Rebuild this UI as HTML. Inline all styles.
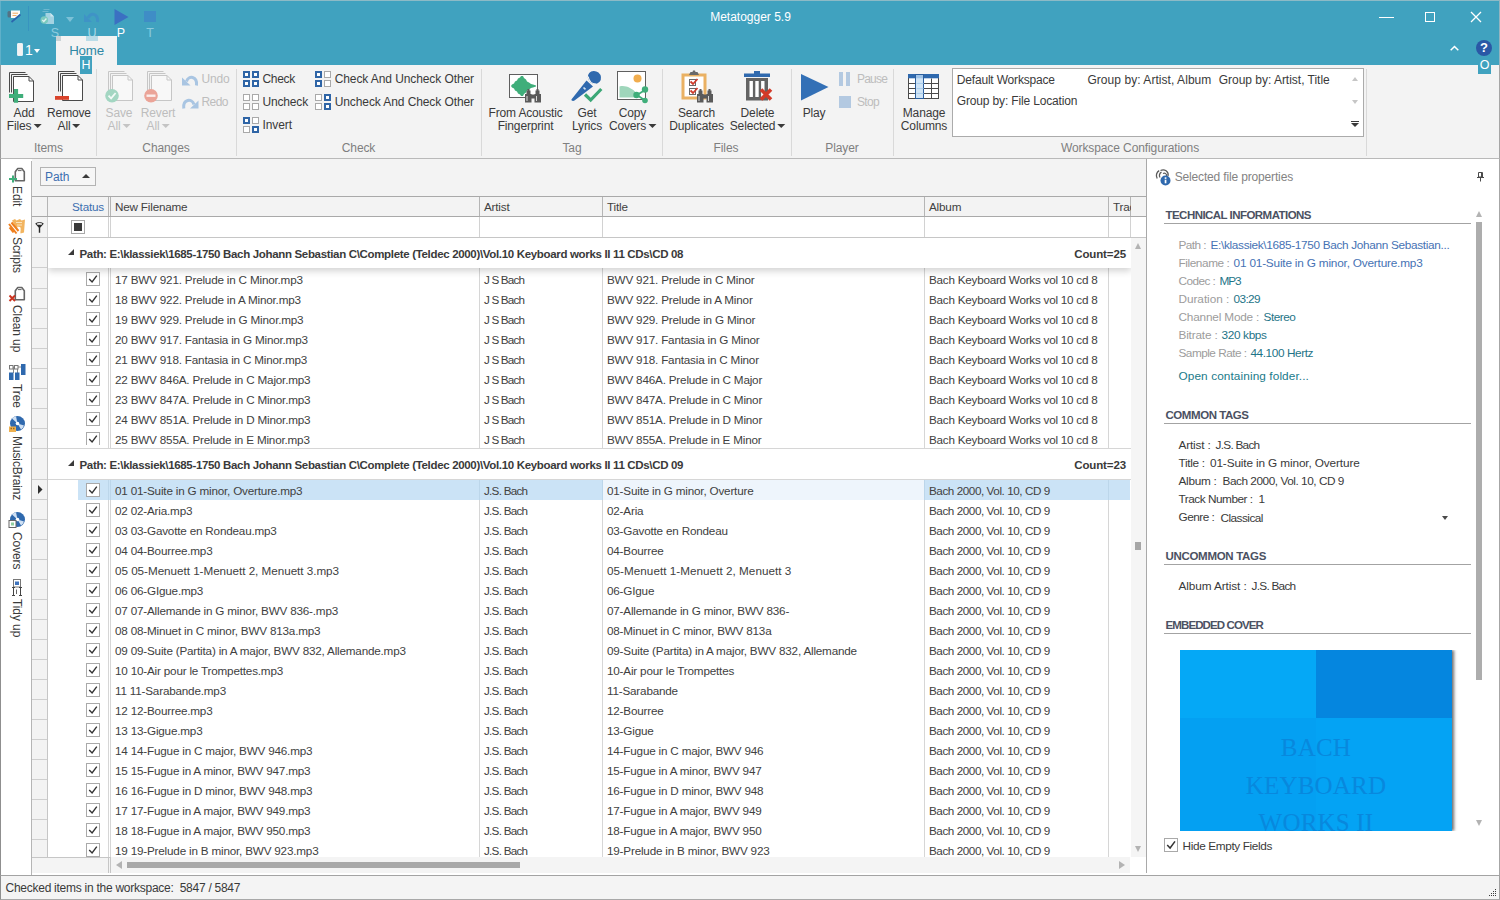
<!DOCTYPE html>
<html lang="en"><head><meta charset="utf-8"><title>Metatogger 5.9</title>
<style>
*{box-sizing:border-box;margin:0;padding:0}
html,body{width:1500px;height:900px;overflow:hidden;background:#fff}
body{font-family:"Liberation Sans",sans-serif;font-size:11.6px;color:#3b3b3b;line-height:14px;letter-spacing:-0.22px}
#win{position:relative;width:1500px;height:900px;overflow:hidden;background:#fff}
.a{position:absolute}
.t{position:absolute;white-space:pre}
.c{position:absolute;white-space:pre;text-align:center;transform:translateX(-50%)}
#title{left:0;top:0;width:1500px;height:65px;background:#40A2BF}
#ribbon{left:0;top:65px;width:1500px;height:94px;background:#F3F3F3;border-bottom:1px solid #b9b9b9;border-left:1px solid #9a9a9a;border-right:1px solid #a6a6a6}
.sep{position:absolute;top:4px;width:1px;height:87px;background:#d8d8d8}
.gl{position:absolute;top:76px;color:#7f7f7f;white-space:pre;transform:translateX(-50%);font-size:12px;letter-spacing:-0.1px}
.bt{position:absolute;white-space:pre;text-align:center;transform:translateX(-50%);color:#3a3a3a;line-height:13px;font-size:12px;letter-spacing:-0.15px}
.dis{color:#bdbdbd !important}
.st{position:absolute;white-space:pre;color:#3a3a3a;font-size:12px;letter-spacing:-0.1px}
.arr{display:inline-block;width:0;height:0;border-left:4px solid transparent;border-right:4px solid transparent;border-top:4.5px solid #3a3a3a;vertical-align:middle;margin-left:2px;margin-bottom:1px}
.dis .arr{border-top-color:#c4c4c4}
.g{font-size:11.7px;letter-spacing:-0.19px;color:#414141}
.gb{font-size:11.5px;letter-spacing:-0.33px;font-weight:700;color:#3a3a3a}
.p{font-size:11.7px;letter-spacing:-0.19px}
.sh{font-size:11.3px;letter-spacing:-0.42px;font-weight:700;color:#4b5162}
svg{position:absolute;overflow:visible}
</style></head>
<body><div id="win">
<div class="a" id="title">
<div class="a" style="left:0;top:0;width:1500px;height:1px;background:#8dbac6"></div>
<div class="a" style="left:0;top:1px;width:1px;height:64px;background:#5fb0c9"></div>
<div class="a" style="left:1499px;top:0;width:1px;height:65px;background:#93b4c0"></div>
<svg style="left:7px;top:9px" width="15" height="15" viewBox="0 0 15 15"><rect x="0.500" y="2" width="3.500" height="6.500" rx="1.500" fill="#586a7a" opacity="0.850"/><path d="M4 1.500h9v3.500l-4.500 4h-4.500z" fill="#fdfbf7"/><path d="M5.500 4.200h5.500M5.500 6.500h4" stroke="#f0a050" stroke-width="0.900"/><path d="M13.500 5.500l-9 7.500" stroke="#2b66ad" stroke-width="1.700"/></svg>
<div class="a" style="left:28px;top:6px;width:1px;height:25px;background:#3894bf"></div>
<svg style="left:40px;top:8px" width="16" height="17" viewBox="0 0 16 17" opacity="0.95"><path d="M3.5 1.5h6M2.5 3.5h6" stroke="#6fb9d0" stroke-width="1"/><path d="M5.5 5h5l3.5 3.500v7.5h-8.500z" fill="#a9d6e4"/><path d="M10.5 5v3.500h3.500" fill="#d6ecf3"/><circle cx="4.300" cy="12" r="3.800" fill="#7fcdbf"/><path d="M2.300 12l1.500 1.500 2.600-3" stroke="#eaf7f4" stroke-width="1.300" fill="none"/></svg>
<div class="a" style="left:65.500px;top:16.500px;width:0;height:0;border-left:4.500px solid transparent;border-right:4.500px solid transparent;border-top:5px solid #7cc1d7"></div>
<svg style="left:84px;top:12px" width="16" height="11" viewBox="0 0 16 11"><path d="M13.500 10C14.500 1 6 0 4.200 6" stroke="#3f93c6" stroke-width="3" fill="none"/><path d="M0 2V10H8z" fill="#3f93c6"/></svg>
<svg style="left:114px;top:9px" width="15" height="16" viewBox="0 0 15 16"><path d="M0.500 0l14 8-14 8z" fill="#3b70c2"/></svg>
<div class="a" style="left:144px;top:11px;width:12px;height:11px;background:#3f8dc6"></div>
<div class="c" style="left:55px;top:26px;color:#8ccbde;font-size:12.500px;letter-spacing:0">S</div>
<div class="c" style="left:92px;top:26px;color:#a9d8e6;font-size:12.500px;letter-spacing:0">U</div>
<div class="c" style="left:121px;top:26px;color:#ffffff;font-size:12.500px;letter-spacing:0">P</div>
<div class="c" style="left:150px;top:26px;color:#8ccbde;font-size:12.500px;letter-spacing:0">T</div>
<div class="a" style="left:17px;top:43px;width:6px;height:13px;background:#f4f2f2;border:1px solid #e6f1f5;border-radius:1px"></div>
<div class="t" style="left:25px;top:42px;color:#fff;font-size:14px;letter-spacing:0;line-height:16px">1</div>
<div class="a" style="left:34px;top:49px;width:0;height:0;border-left:3.500px solid transparent;border-right:3.500px solid transparent;border-top:4px solid #fff"></div>
<div class="a" style="left:56px;top:36px;width:61px;height:30px;background:#F3F3F3"></div>
<div class="a" style="left:56px;top:36px;width:5px;height:5px;background:#c9d3d6"></div>
<div class="a" style="left:86px;top:36px;width:12px;height:5px;background:#b9dce8"></div>
<div class="c" style="left:86.500px;top:43px;color:#2f88a5;font-size:13.300px;line-height:16px;letter-spacing:-0.200px">Home</div>
<div class="c" style="left:750.500px;top:9px;color:#fff;font-size:12px;line-height:16px;letter-spacing:0">Metatogger 5.9</div>
<div class="a" style="left:1379px;top:17px;width:15px;height:1px;background:#fff"></div>
<div class="a" style="left:1425px;top:12px;width:10px;height:10px;border:1px solid #fff"></div>
<svg style="left:1471px;top:12px" width="10" height="10" viewBox="0 0 10 10"><path d="M0 0l10 10M10 0l-10 10" stroke="#fff" stroke-width="1.300"/></svg>
<svg style="left:1450px;top:45px" width="9" height="6" viewBox="0 0 9 6"><path d="M0.700 5.300l3.800-3.800 3.800 3.800" stroke="#fff" stroke-width="1.500" fill="none"/></svg>
<div class="a" style="left:1476px;top:40px;width:16px;height:16px;border-radius:8px;background:#2a58a6"></div>
<div class="c" style="left:1484px;top:40px;color:#fff;font-size:13px;font-weight:700;line-height:16px;letter-spacing:0">?</div>
</div>
<div class="a" id="ribbon"></div>
<svg style="left:6px;top:71px" width="32" height="32" viewBox="0 0 32 32"><path d="M3.500 21.500V1.500H19.500M5.500 21.500V3.500H21.500" stroke="#4a4a4a" stroke-width="1" fill="none"/><path d="M7.500 5.500H23L27.500 10V30.500H7.500Z" fill="#fff" stroke="#4a4a4a" stroke-width="1"/><path d="M23 5.500V10H27.500" fill="none" stroke="#4a4a4a" stroke-width="1"/><path d="M3 25h14.200M10 18v13.800" stroke="#3fae7a" stroke-width="4.200"/></svg>
<div class="bt" style="left:24.0px;top:107px">Add<br>Files<span class="arr"></span></div>
<svg style="left:55px;top:70px" width="32" height="32" viewBox="0 0 32 32"><path d="M3.500 21.500V1.500H19.500M5.500 21.500V3.500H21.500" stroke="#4a4a4a" stroke-width="1" fill="none"/><path d="M7.500 5.500H23L27.500 10V30.500H7.500Z" fill="#fff" stroke="#4a4a4a" stroke-width="1"/><path d="M23 5.500V10H27.500" fill="none" stroke="#4a4a4a" stroke-width="1"/><rect x="0" y="26" width="14" height="3.800" fill="#d9432b"/></svg>
<div class="bt" style="left:69.0px;top:107px">Remove<br>All<span class="arr"></span></div>
<div class="gl" style="left:48.5px;top:141px">Items</div>
<div class="a" style="left:96px;top:69px;width:1px;height:87px;background:#d9d9d9"></div>
<svg style="left:105px;top:70px" width="32" height="32" viewBox="0 0 32 32"><path d="M3.500 21.500V1.500H19.500M5.500 21.500V3.500H21.500" stroke="#c6c6c6" stroke-width="1" fill="none"/><path d="M7.500 5.500H23L27.500 10V30.500H7.500Z" fill="#f8f8f8" stroke="#c6c6c6" stroke-width="1"/><path d="M23 5.500V10H27.500" fill="none" stroke="#c6c6c6" stroke-width="1"/><circle cx="7" cy="25.700" r="6.800" fill="#a3d6c2"/><path d="M3.500 25.700l2.600 2.700 4.500-5.400" stroke="#f3faf7" stroke-width="1.800" fill="none"/></svg>
<div class="bt dis" style="left:119.0px;top:107px">Save<br>All<span class="arr"></span></div>
<svg style="left:144px;top:70px" width="32" height="32" viewBox="0 0 32 32"><path d="M3.500 21.500V1.500H19.500M5.500 21.500V3.500H21.500" stroke="#c6c6c6" stroke-width="1" fill="none"/><path d="M7.500 5.500H23L27.500 10V30.500H7.500Z" fill="#f8f8f8" stroke="#c6c6c6" stroke-width="1"/><path d="M23 5.500V10H27.500" fill="none" stroke="#c6c6c6" stroke-width="1"/><circle cx="7" cy="25.700" r="6.800" fill="#eba498"/><rect x="2.500" y="24.500" width="9" height="2.400" fill="#fbeeec"/></svg>
<div class="bt dis" style="left:158.0px;top:107px">Revert<br>All<span class="arr"></span></div>
<svg style="left:182px;top:75px" width="17" height="11" viewBox="0 0 17 11"><path d="M14.500 10.500C15.500 1 6.500 0 4.500 6.500" stroke="#a9c5e2" stroke-width="3" fill="none"/><path d="M0 2.500V10.500H8.500z" fill="#a9c5e2"/></svg>
<div class="t" style="left:201.5px;top:72.0px;font-size:12px;letter-spacing:-0.172px;color:#bdbdbd;">Undo</div>
<svg style="left:182px;top:98px" width="17" height="11" viewBox="0 0 17 11"><path d="M1.800 10.500C0.500 1 10 0 12 6.500" stroke="#a9c5e2" stroke-width="3" fill="none"/><path d="M16.500 2.500V10.500H8z" fill="#a9c5e2"/></svg>
<div class="t" style="left:201.5px;top:95.0px;font-size:12px;letter-spacing:-0.597px;color:#bdbdbd;">Redo</div>
<div class="gl" style="left:166.0px;top:141px">Changes</div>
<div class="a" style="left:236px;top:69px;width:1px;height:87px;background:#d9d9d9"></div>
<svg style="left:243px;top:71px" width="16" height="16" viewBox="0 0 16 16"><rect x="1" y="1" width="5" height="5" fill="#fff" stroke="#2f65a6" stroke-width="2"/><rect x="10" y="1" width="5" height="5" fill="#fff" stroke="#2f65a6" stroke-width="2"/><rect x="1" y="10" width="5" height="5" fill="#fff" stroke="#2f65a6" stroke-width="2"/><rect x="10" y="10" width="5" height="5" fill="#fff" stroke="#2f65a6" stroke-width="2"/></svg>
<div class="t" style="left:262.5px;top:72.0px;font-size:12px;letter-spacing:-0.303px;color:#3a3a3a;">Check</div>
<svg style="left:243px;top:94px" width="16" height="16" viewBox="0 0 16 16"><rect x="0.5" y="0.5" width="6" height="6" fill="#fff" stroke="#a9a9a9" stroke-width="1"/><rect x="9.5" y="0.5" width="6" height="6" fill="#fff" stroke="#a9a9a9" stroke-width="1"/><rect x="0.5" y="9.5" width="6" height="6" fill="#fff" stroke="#a9a9a9" stroke-width="1"/><rect x="9.5" y="9.5" width="6" height="6" fill="#fff" stroke="#a9a9a9" stroke-width="1"/></svg>
<div class="t" style="left:262.5px;top:95.0px;font-size:12px;letter-spacing:-0.170px;color:#3a3a3a;">Uncheck</div>
<svg style="left:243px;top:117px" width="16" height="16" viewBox="0 0 16 16"><rect x="1" y="1" width="5" height="5" fill="#fff" stroke="#2f65a6" stroke-width="2"/><rect x="9.5" y="0.5" width="6" height="6" fill="#fff" stroke="#a9a9a9" stroke-width="1"/><rect x="0.5" y="9.5" width="6" height="6" fill="#fff" stroke="#a9a9a9" stroke-width="1"/><rect x="10" y="10" width="5" height="5" fill="#fff" stroke="#2f65a6" stroke-width="2"/></svg>
<div class="t" style="left:262.5px;top:118.0px;font-size:12px;letter-spacing:-0.085px;color:#3a3a3a;">Invert</div>
<svg style="left:315px;top:71px" width="16" height="16" viewBox="0 0 16 16"><rect x="1" y="1" width="5" height="5" fill="#fff" stroke="#2f65a6" stroke-width="2"/><rect x="9.5" y="0.5" width="6" height="6" fill="#fff" stroke="#a9a9a9" stroke-width="1"/><rect x="1" y="10" width="5" height="5" fill="#fff" stroke="#2f65a6" stroke-width="2"/><rect x="9.5" y="9.5" width="6" height="6" fill="#fff" stroke="#a9a9a9" stroke-width="1"/></svg>
<div class="t" style="left:334.7px;top:72.0px;font-size:12px;letter-spacing:-0.092px;color:#3a3a3a;">Check And Uncheck Other</div>
<svg style="left:315px;top:94px" width="16" height="16" viewBox="0 0 16 16"><rect x="0.5" y="0.5" width="6" height="6" fill="#fff" stroke="#a9a9a9" stroke-width="1"/><rect x="10" y="1" width="5" height="5" fill="#fff" stroke="#2f65a6" stroke-width="2"/><rect x="0.5" y="9.5" width="6" height="6" fill="#fff" stroke="#a9a9a9" stroke-width="1"/><rect x="10" y="10" width="5" height="5" fill="#fff" stroke="#2f65a6" stroke-width="2"/></svg>
<div class="t" style="left:334.7px;top:95.0px;font-size:12px;letter-spacing:-0.092px;color:#3a3a3a;">Uncheck And Check Other</div>
<div class="gl" style="left:358.5px;top:141px">Check</div>
<div class="a" style="left:481px;top:69px;width:1px;height:87px;background:#d9d9d9"></div>
<svg style="left:509px;top:73px" width="33" height="30" viewBox="0 0 33 30"><rect x="0.500" y="1.500" width="28" height="23" fill="#fff" stroke="#5f5f5f" stroke-width="1"/><polygon points="2,13 3,11.5 5,10.5 6,8.5 8,7.5 9,5.5 11,4.5 12,3 14,3 15,5 17,6.5 18,8.5 20,9.5 22,11 24,11.5 27,12.5 27,13.5 24,14.5 22,15 20,16.5 18,17.5 17,19.5 15,21 14,23 12,23 11,21.5 9,20.5 8,18.5 6,17.5 5,15.5 3,14.5 2,13" fill="#3fae7a"/><g transform="translate(16,16)" fill="#5a5a5a"><rect x="0" y="5" width="6.500" height="8.500"/><rect x="9.500" y="5" width="6.500" height="8.500"/><rect x="1.500" y="1.500" width="4" height="4"/><rect x="10.500" y="1.500" width="4" height="4"/><rect x="2.500" y="0" width="2" height="2"/><rect x="11.500" y="0" width="2" height="2"/><rect x="6" y="5.500" width="4" height="4"/><path d="M2 7v5M11.500 7v5" stroke="#d8d8d8" stroke-width="1"/></g></svg>
<div class="bt" style="left:525.5px;top:107px">From Acoustic<br>Fingerprint</div>
<svg style="left:571px;top:70px" width="32" height="32" viewBox="0 0 32 32"><path d="M0.600 29.200L15.500 10.500l6.500 6L3.500 30.500c-1.500 1.200-3.800-.2-2.900-1.300z" fill="#2f69ae"/><ellipse cx="23.400" cy="7.400" rx="6.800" ry="6.300" transform="rotate(40 23.400 7.400)" fill="#2f69ae"/><path d="M17.200 6.500c0.500 4 3.500 7.200 7.800 7.600" stroke="#f3f3f3" stroke-width="1.200" fill="none"/><path d="M12.500 17.500l2 1.800" stroke="#d6e4f3" stroke-width="1.600"/><path d="M14 24.500l5.700 5.500 10.600-11" stroke="#3ba776" stroke-width="3.200" fill="none"/></svg>
<div class="bt" style="left:587.0px;top:107px">Get<br>Lyrics</div>
<svg style="left:617px;top:71px" width="32" height="32" viewBox="0 0 32 32"><rect x="0.500" y="0.500" width="28" height="28" fill="#fff" stroke="#5f5f5f" stroke-width="1"/><circle cx="20.500" cy="7.500" r="4" fill="#f1ad4e"/><path d="M2.500 15.500c6-1.500 12 1.500 17 6.500v4.500h-17z" fill="#9fd6bb"/><path d="M20 24l8-5M20 24l8 5.500" stroke="#3fae7a" stroke-width="1.800"/><circle cx="19.500" cy="24" r="3.200" fill="#3fae7a"/><circle cx="28" cy="18.500" r="3.200" fill="#3fae7a"/><circle cx="28" cy="29.500" r="2.800" fill="#3fae7a"/></svg>
<div class="bt" style="left:632.5px;top:107px">Copy<br>Covers<span class="arr"></span></div>
<div class="gl" style="left:572.0px;top:141px">Tag</div>
<div class="a" style="left:662px;top:69px;width:1px;height:87px;background:#d9d9d9"></div>
<svg style="left:681px;top:70px" width="33" height="33" viewBox="0 0 33 33"><rect x="2" y="5" width="22" height="23" fill="#fff" stroke="#eab163" stroke-width="3"/><path d="M8 5l1.500-3h2l.5-1.500h2l.5 1.500h2l1.500 3z" fill="#6a6a6a"/><rect x="8.500" y="9.500" width="6" height="6" fill="#fff" stroke="#6a6a6a"/><rect x="8.500" y="18.500" width="6" height="6" fill="#fff" stroke="#6a6a6a"/><path d="M9.500 11.500l2.500 2.500 4.500-5M9.500 20.500l2.500 2.500 4.500-5" stroke="#d03c2c" stroke-width="1.800" fill="none"/><g transform="translate(16,19)" fill="#5a5a5a"><rect x="0" y="5" width="6.500" height="8.500"/><rect x="9.500" y="5" width="6.500" height="8.500"/><rect x="1.500" y="1.500" width="4" height="4"/><rect x="10.500" y="1.500" width="4" height="4"/><rect x="2.500" y="0" width="2" height="2"/><rect x="11.500" y="0" width="2" height="2"/><rect x="6" y="5.500" width="4" height="4"/><path d="M2 7v5M11.500 7v5" stroke="#d8d8d8" stroke-width="1"/></g></svg>
<div class="bt" style="left:696.5px;top:107px">Search<br>Duplicates</div>
<svg style="left:743px;top:70px" width="32" height="32" viewBox="0 0 32 32"><rect x="1" y="3.500" width="26" height="3.500" fill="#2f69ae"/><rect x="11" y="1" width="6" height="3" fill="#2f69ae"/><rect x="3" y="8" width="22" height="22.500" fill="#636363"/><rect x="6.500" y="11" width="3.400" height="16" fill="#fff"/><rect x="12.300" y="11" width="3.400" height="16" fill="#fff"/><rect x="18.100" y="11" width="3.400" height="16" fill="#fff"/><path d="M18 19.500l10 10M28 19.500l-10 10" stroke="#d23a28" stroke-width="3.600"/></svg>
<div class="bt" style="left:757.5px;top:107px">Delete<br>Selected<span class="arr"></span></div>
<div class="gl" style="left:726.0px;top:141px">Files</div>
<div class="a" style="left:791px;top:69px;width:1px;height:87px;background:#d9d9d9"></div>
<svg style="left:801px;top:74px" width="28" height="27" viewBox="0 0 28 27"><path d="M0 0l27.500 13-27.500 13.500z" fill="#3370b6"/></svg>
<div class="bt" style="left:814.0px;top:107px">Play</div>
<div class="a" style="left:839px;top:72px;width:4px;height:14px;background:#b3c9e1"></div><div class="a" style="left:846px;top:72px;width:4px;height:14px;background:#b3c9e1"></div>
<div class="t" style="left:857.0px;top:72.0px;font-size:12px;letter-spacing:-0.805px;color:#bdbdbd;">Pause</div>
<div class="a" style="left:839px;top:96px;width:12px;height:12px;background:#b3c9e1"></div>
<div class="t" style="left:857.0px;top:95.0px;font-size:12px;letter-spacing:-0.672px;color:#bdbdbd;">Stop</div>
<div class="gl" style="left:842.0px;top:141px">Player</div>
<div class="a" style="left:893px;top:69px;width:1px;height:87px;background:#d9d9d9"></div>
<svg style="left:908px;top:74px" width="32" height="26" viewBox="0 0 32 26"><rect x="0.500" y="0.500" width="30" height="24" fill="#fff" stroke="#4a4a4a"/><rect x="0" y="0" width="31" height="4.300" fill="#2f69ae"/><rect x="7.500" y="0.500" width="8" height="24" fill="#cfe4f6" stroke="#2b5f9f" stroke-width="1"/><rect x="8" y="1" width="7" height="3.300" fill="#9fc3e8"/><path d="M0.500 9.500h7M16 9.500h14.500M0.500 14.500h7M16 14.500h14.500M0.500 19.500h7M16 19.500h14.500M23.500 4.500v20" stroke="#4a4a4a" stroke-width="1" fill="none"/><path d="M8.500 9.500h7M8.500 14.500h7M8.500 19.500h7" stroke="#a8cdee" stroke-width="1"/></svg>
<div class="bt" style="left:924.0px;top:107px">Manage<br>Columns</div>
<div class="a" style="left:952px;top:68px;width:412px;height:69px;background:#fff;border:1px solid #ababab"></div>
<div class="t" style="left:956.8px;top:73.0px;font-size:12px;letter-spacing:-0.186px;color:#3a3a3a;">Default Workspace</div>
<div class="t" style="left:1087.4px;top:73.0px;font-size:12px;letter-spacing:0.056px;color:#3a3a3a;">Group by: Artist, Album</div>
<div class="t" style="left:1218.7px;top:73.0px;font-size:12px;letter-spacing:-0.016px;color:#3a3a3a;">Group by: Artist, Title</div>
<div class="t" style="left:956.8px;top:94.0px;font-size:12px;letter-spacing:-0.155px;color:#3a3a3a;">Group by: File Location</div>
<div class="a" style="left:1351.500px;top:77px;width:0;height:0;border-left:3.500px solid transparent;border-right:3.500px solid transparent;border-bottom:4px solid #c6c6c6"></div>
<div class="a" style="left:1351.500px;top:100px;width:0;height:0;border-left:3.500px solid transparent;border-right:3.500px solid transparent;border-top:4px solid #c6c6c6"></div>
<div class="a" style="left:1351px;top:120.500px;width:8px;height:1.500px;background:#3a3a3a"></div>
<div class="a" style="left:1351px;top:123px;width:0;height:0;border-left:4px solid transparent;border-right:4px solid transparent;border-top:4px solid #3a3a3a"></div>
<div class="gl" style="left:1130.0px;top:141px">Workspace Configurations</div>
<div class="a" style="left:1366px;top:69px;width:1px;height:87px;background:#d9d9d9"></div>
<div class="a" style="left:80px;top:56px;width:12px;height:18px;background:#40A2BF"></div><div class="c" style="left:86px;top:57px;color:#fff;font-size:12.500px;line-height:16px;letter-spacing:0">H</div>
<div class="a" style="left:1478px;top:59px;width:13px;height:15px;background:#40A2BF"></div><div class="c" style="left:1484.500px;top:57px;color:#fff;font-size:12.500px;line-height:16px;letter-spacing:0">O</div>
<div class="a" style="left:0;top:159px;width:1px;height:741px;background:#8f8f8f"></div>
<div class="a" style="left:1499px;top:159px;width:1px;height:741px;background:#a6a6a6"></div>
<div class="a" style="left:31px;top:161px;width:1px;height:714px;background:#b5b5b5"></div>
<svg style="left:8px;top:167px" width="18" height="16" viewBox="0 0 18 16"><path d="M7.300 13.800V4.800L9.800 1.500h4L16.300 4.800v9z" fill="#fff" stroke="#666" stroke-width="1.600" stroke-linejoin="round"/><path d="M10 3.600h3.600" stroke="#666" stroke-width="1"/><path d="M1 12h8M5 8.500v7" stroke="#3fae7a" stroke-width="2"/></svg>
<div class="a" style="left:9px;top:186px;width:16px;writing-mode:vertical-rl;white-space:pre;font-size:12px;letter-spacing:-0.1px;line-height:16px;color:#3a3a3a">Edit</div>
<svg style="left:8px;top:218px" width="18" height="17" viewBox="0 0 18 17"><path d="M4 2.500l3-1.500 1.500 1.500L12 1l1.500 1.500 3.500-1-1 13-3.500 1-.5-6.500-2.500-.5-.5 2.500L6.500 7z" fill="#f2b45f"/><path d="M8 4.500h6M9 7h5M12.500 9.500v4" stroke="#fbe3bd" stroke-width="1"/><path d="M1 6l7.500 9.500M3.500 4.500l7 8.500M1.500 9.500l4 5" stroke="#ef7f1e" stroke-width="2"/></svg>
<div class="a" style="left:9px;top:237px;width:16px;writing-mode:vertical-rl;white-space:pre;font-size:12px;letter-spacing:-0.1px;line-height:16px;color:#3a3a3a">Scripts</div>
<svg style="left:8px;top:286px" width="18" height="16" viewBox="0 0 18 16"><path d="M7.300 13.800V4.800L9.800 1.500h4L16.300 4.800v9z" fill="#fff" stroke="#666" stroke-width="1.600" stroke-linejoin="round"/><path d="M10 3.600h3.600" stroke="#666" stroke-width="1"/><path d="M1.500 9.500l5.500 5.500M7 9.500l-5.500 5.500" stroke="#c9321f" stroke-width="1.900"/></svg>
<div class="a" style="left:9px;top:305px;width:16px;writing-mode:vertical-rl;white-space:pre;font-size:12px;letter-spacing:-0.1px;line-height:16px;color:#3a3a3a">Clean up</div>
<svg style="left:9px;top:364px" width="17" height="16" viewBox="0 0 17 16"><path d="M2 3h10M4.500 3v6M8.500 3v6" stroke="#8a8a8a" stroke-width="1" fill="none"/><rect x="0.500" y="1.500" width="3.500" height="3.500" fill="#fff" stroke="#777"/><rect x="5.500" y="1.500" width="3.500" height="3.500" fill="#fff" stroke="#777"/><rect x="0" y="8.500" width="4.500" height="7.500" fill="#2f69ae"/><rect x="6" y="8.500" width="4.500" height="7.500" fill="#2f69ae"/><rect x="12" y="0" width="4.500" height="11" fill="#2f69ae"/></svg>
<div class="a" style="left:9px;top:384px;width:16px;writing-mode:vertical-rl;white-space:pre;font-size:12px;letter-spacing:-0.1px;line-height:16px;color:#3a3a3a">Tree</div>
<svg style="left:8px;top:416px" width="17" height="16" viewBox="0 0 17 16"><circle cx="9.500" cy="7.500" r="7.500" fill="#2f69ae"/><path d="M9.500 7.500L4 2.500A7.500 7.500 0 0 1 8 0.200zM9.500 7.500l6.500 2a7.500 7.500 0 0 1-3 4z" fill="#cfe0f3"/><circle cx="9.500" cy="7.500" r="1.800" fill="#fff"/><rect x="1" y="10.500" width="7" height="5.500" fill="#eeb04e"/><path d="M2.500 12.500h1.500M5 12.500h1.500" stroke="#9a6a20" stroke-width="1.500"/></svg>
<div class="a" style="left:9px;top:436px;width:16px;writing-mode:vertical-rl;white-space:pre;font-size:12px;letter-spacing:-0.1px;line-height:16px;color:#3a3a3a">MusicBrainz</div>
<svg style="left:8px;top:512px" width="17" height="16" viewBox="0 0 17 16"><circle cx="9.500" cy="7.500" r="7.500" fill="#2f69ae"/><path d="M9.500 7.500L4 2.500A7.500 7.500 0 0 1 8 0.200zM9.500 7.500l6.500 2a7.500 7.500 0 0 1-3 4z" fill="#cfe0f3"/><circle cx="9.500" cy="7.500" r="1.800" fill="#fff"/><rect x="1" y="8.500" width="7" height="7" fill="#fff" stroke="#666"/><rect x="3" y="10.500" width="3" height="3" fill="#8fcf9f"/></svg>
<div class="a" style="left:9px;top:532px;width:16px;writing-mode:vertical-rl;white-space:pre;font-size:12px;letter-spacing:-0.1px;line-height:16px;color:#3a3a3a">Covers</div>
<svg style="left:11px;top:579px" width="12" height="18" viewBox="0 0 12 18"><rect x="2.500" y="0.500" width="7" height="7.500" fill="#fff" stroke="#777"/><rect x="4" y="2.500" width="4" height="3.500" fill="#3f74bd"/><path d="M1 8.500h3M2.500 8.500v8M1 16.500h3M8 8.500h3M9.500 8.500v8M8 16.500h3" stroke="#444" stroke-width="1" fill="none"/><path d="M5.500 10.500v4.500" stroke="#666" stroke-width="1"/></svg>
<div class="a" style="left:9px;top:599px;width:16px;writing-mode:vertical-rl;white-space:pre;font-size:12px;letter-spacing:-0.1px;line-height:16px;color:#3a3a3a">Tidy up</div>
<div class="a" style="left:32px;top:159px;width:1114px;height:38px;background:#F3F3F3"></div>
<div class="a" style="left:1146px;top:159px;width:1px;height:714px;background:#a9a9a9"></div>
<div class="a" style="left:40px;top:167px;width:56px;height:19px;background:#f6f6f6;border:1px solid #b3b3b3"></div>
<div class="t" style="left:45px;top:170px;color:#3d6fb0;font-size:12px;letter-spacing:-0.100px">Path</div>
<div class="a" style="left:82px;top:174px;width:0;height:0;border-left:4px solid transparent;border-right:4px solid transparent;border-bottom:4.500px solid #3a3a3a"></div>
<div class="a" style="left:32px;top:196px;width:1114px;height:21px;background:#F3F3F3;border-top:1px solid #a9a9a9;border-bottom:1px solid #a9a9a9"></div>
<div class="a" style="left:47px;top:197px;width:1px;height:19px;background:#b5b5b5"></div>
<div class="a" style="left:108px;top:197px;width:1px;height:19px;background:#b5b5b5"></div>
<div class="a" style="left:110px;top:197px;width:1px;height:19px;background:#b5b5b5"></div>
<div class="a" style="left:479px;top:197px;width:1px;height:19px;background:#b5b5b5"></div>
<div class="a" style="left:602px;top:197px;width:1px;height:19px;background:#b5b5b5"></div>
<div class="a" style="left:924px;top:197px;width:1px;height:19px;background:#b5b5b5"></div>
<div class="a" style="left:1108px;top:197px;width:1px;height:19px;background:#b5b5b5"></div>
<div class="a" style="left:1130px;top:197px;width:1px;height:19px;background:#b5b5b5"></div>
<div class="t g" style="left:72px;top:200px;color:#3d6fb0">Status</div>
<div class="t g" style="left:115px;top:200px">New Filename</div>
<div class="t g" style="left:484px;top:200px">Artist</div>
<div class="t g" style="left:607px;top:200px">Title</div>
<div class="t g" style="left:929px;top:200px">Album</div>
<div class="t g" style="left:1113px;top:200px;width:18px;overflow:hidden">Track</div>
<div class="a" style="left:32px;top:217px;width:1114px;height:21px;background:#fff;border-bottom:1px solid #c6c6c6"></div>
<div class="a" style="left:32px;top:217px;width:15px;height:20px;background:#F3F3F3"></div>
<div class="a" style="left:47px;top:217px;width:1px;height:20px;background:#d2d2d2"></div>
<div class="a" style="left:108px;top:217px;width:1px;height:20px;background:#d2d2d2"></div>
<div class="a" style="left:110px;top:217px;width:1px;height:20px;background:#d2d2d2"></div>
<div class="a" style="left:479px;top:217px;width:1px;height:20px;background:#d2d2d2"></div>
<div class="a" style="left:602px;top:217px;width:1px;height:20px;background:#d2d2d2"></div>
<div class="a" style="left:924px;top:217px;width:1px;height:20px;background:#d2d2d2"></div>
<div class="a" style="left:1108px;top:217px;width:1px;height:20px;background:#d2d2d2"></div>
<div class="a" style="left:1130px;top:217px;width:1px;height:20px;background:#d2d2d2"></div>
<svg style="left:35px;top:222px" width="9" height="11" viewBox="0 0 9 11"><path d="M0.300 1.800c0-2.200 8.400-2.200 8.400 0L5.200 5.800v4.900h-1.400V5.800z" fill="#2a2a2a"/><ellipse cx="4.500" cy="1.900" rx="2.800" ry="0.900" fill="#f3f3f3"/></svg>
<div class="a" style="left:71px;top:220px;width:14px;height:14px;background:#fff;border:1px solid #a9a9a9"></div><div class="a" style="left:74px;top:223px;width:8px;height:8px;background:#3a3a3a"></div>
<div class="a" style="left:32px;top:238px;width:16px;height:619px;background:#F3F3F3"></div>
<div class="a" style="left:47px;top:238px;width:1px;height:619px;background:#c6c6c6"></div>
<div class="a" style="left:0;top:238px;width:1146px;height:619px;overflow:hidden"><div class="a" style="left:0;top:-238px;width:1146px;height:900px">
<div class="a" style="left:108px;top:238px;width:1px;height:211px;background:#d6d6d6"></div>
<div class="a" style="left:110px;top:238px;width:1px;height:211px;background:#d6d6d6"></div>
<div class="a" style="left:479px;top:238px;width:1px;height:211px;background:#d6d6d6"></div>
<div class="a" style="left:602px;top:238px;width:1px;height:211px;background:#d6d6d6"></div>
<div class="a" style="left:924px;top:238px;width:1px;height:211px;background:#d6d6d6"></div>
<div class="a" style="left:1108px;top:238px;width:1px;height:211px;background:#d6d6d6"></div>
<div class="a" style="left:108px;top:480px;width:1px;height:377px;background:#d6d6d6"></div>
<div class="a" style="left:110px;top:480px;width:1px;height:377px;background:#d6d6d6"></div>
<div class="a" style="left:479px;top:480px;width:1px;height:377px;background:#d6d6d6"></div>
<div class="a" style="left:602px;top:480px;width:1px;height:377px;background:#d6d6d6"></div>
<div class="a" style="left:924px;top:480px;width:1px;height:377px;background:#d6d6d6"></div>
<div class="a" style="left:1108px;top:480px;width:1px;height:377px;background:#d6d6d6"></div>
<div class="a" style="left:86px;top:272px;width:14px;height:14px;background:#fff;border:1px solid #a9a9a9"></div><svg style="left:86px;top:272px" width="14" height="14" viewBox="0 0 14 14"><path d="M3.200 7l2.900 3 4.700-6.300" stroke="#333" stroke-width="1.400" fill="none"/></svg>
<div class="t g" style="left:115px;top:273px">17 BWV 921. Prelude in C Minor.mp3</div>
<div class="t g" style="left:484px;top:273px;letter-spacing:-0.815px">J S Bach</div>
<div class="t g" style="left:607px;top:273px">BWV 921. Prelude in C Minor</div>
<div class="t g" style="left:929px;top:273px;letter-spacing:-0.236px">Bach Keyboard Works vol 10 cd 8</div>
<div class="a" style="left:32px;top:288px;width:15px;height:1px;background:#cfcfcf"></div>
<div class="a" style="left:86px;top:292px;width:14px;height:14px;background:#fff;border:1px solid #a9a9a9"></div><svg style="left:86px;top:292px" width="14" height="14" viewBox="0 0 14 14"><path d="M3.200 7l2.900 3 4.700-6.300" stroke="#333" stroke-width="1.400" fill="none"/></svg>
<div class="t g" style="left:115px;top:293px">18 BWV 922. Prelude in A Minor.mp3</div>
<div class="t g" style="left:484px;top:293px;letter-spacing:-0.815px">J S Bach</div>
<div class="t g" style="left:607px;top:293px">BWV 922. Prelude in A Minor</div>
<div class="t g" style="left:929px;top:293px;letter-spacing:-0.236px">Bach Keyboard Works vol 10 cd 8</div>
<div class="a" style="left:32px;top:308px;width:15px;height:1px;background:#cfcfcf"></div>
<div class="a" style="left:86px;top:312px;width:14px;height:14px;background:#fff;border:1px solid #a9a9a9"></div><svg style="left:86px;top:312px" width="14" height="14" viewBox="0 0 14 14"><path d="M3.200 7l2.900 3 4.700-6.300" stroke="#333" stroke-width="1.400" fill="none"/></svg>
<div class="t g" style="left:115px;top:313px">19 BWV 929. Prelude in G Minor.mp3</div>
<div class="t g" style="left:484px;top:313px;letter-spacing:-0.815px">J S Bach</div>
<div class="t g" style="left:607px;top:313px">BWV 929. Prelude in G Minor</div>
<div class="t g" style="left:929px;top:313px;letter-spacing:-0.236px">Bach Keyboard Works vol 10 cd 8</div>
<div class="a" style="left:32px;top:328px;width:15px;height:1px;background:#cfcfcf"></div>
<div class="a" style="left:86px;top:332px;width:14px;height:14px;background:#fff;border:1px solid #a9a9a9"></div><svg style="left:86px;top:332px" width="14" height="14" viewBox="0 0 14 14"><path d="M3.200 7l2.900 3 4.700-6.300" stroke="#333" stroke-width="1.400" fill="none"/></svg>
<div class="t g" style="left:115px;top:333px">20 BWV 917. Fantasia in G Minor.mp3</div>
<div class="t g" style="left:484px;top:333px;letter-spacing:-0.815px">J S Bach</div>
<div class="t g" style="left:607px;top:333px">BWV 917. Fantasia in G Minor</div>
<div class="t g" style="left:929px;top:333px;letter-spacing:-0.236px">Bach Keyboard Works vol 10 cd 8</div>
<div class="a" style="left:32px;top:348px;width:15px;height:1px;background:#cfcfcf"></div>
<div class="a" style="left:86px;top:352px;width:14px;height:14px;background:#fff;border:1px solid #a9a9a9"></div><svg style="left:86px;top:352px" width="14" height="14" viewBox="0 0 14 14"><path d="M3.200 7l2.900 3 4.700-6.300" stroke="#333" stroke-width="1.400" fill="none"/></svg>
<div class="t g" style="left:115px;top:353px">21 BWV 918. Fantasia in C Minor.mp3</div>
<div class="t g" style="left:484px;top:353px;letter-spacing:-0.815px">J S Bach</div>
<div class="t g" style="left:607px;top:353px">BWV 918. Fantasia in C Minor</div>
<div class="t g" style="left:929px;top:353px;letter-spacing:-0.236px">Bach Keyboard Works vol 10 cd 8</div>
<div class="a" style="left:32px;top:368px;width:15px;height:1px;background:#cfcfcf"></div>
<div class="a" style="left:86px;top:372px;width:14px;height:14px;background:#fff;border:1px solid #a9a9a9"></div><svg style="left:86px;top:372px" width="14" height="14" viewBox="0 0 14 14"><path d="M3.200 7l2.900 3 4.700-6.300" stroke="#333" stroke-width="1.400" fill="none"/></svg>
<div class="t g" style="left:115px;top:373px">22 BWV 846A. Prelude in C Major.mp3</div>
<div class="t g" style="left:484px;top:373px;letter-spacing:-0.815px">J S Bach</div>
<div class="t g" style="left:607px;top:373px">BWV 846A. Prelude in C Major</div>
<div class="t g" style="left:929px;top:373px;letter-spacing:-0.236px">Bach Keyboard Works vol 10 cd 8</div>
<div class="a" style="left:32px;top:388px;width:15px;height:1px;background:#cfcfcf"></div>
<div class="a" style="left:86px;top:392px;width:14px;height:14px;background:#fff;border:1px solid #a9a9a9"></div><svg style="left:86px;top:392px" width="14" height="14" viewBox="0 0 14 14"><path d="M3.200 7l2.900 3 4.700-6.300" stroke="#333" stroke-width="1.400" fill="none"/></svg>
<div class="t g" style="left:115px;top:393px">23 BWV 847A. Prelude in C Minor.mp3</div>
<div class="t g" style="left:484px;top:393px;letter-spacing:-0.815px">J S Bach</div>
<div class="t g" style="left:607px;top:393px">BWV 847A. Prelude in C Minor</div>
<div class="t g" style="left:929px;top:393px;letter-spacing:-0.236px">Bach Keyboard Works vol 10 cd 8</div>
<div class="a" style="left:32px;top:408px;width:15px;height:1px;background:#cfcfcf"></div>
<div class="a" style="left:86px;top:412px;width:14px;height:14px;background:#fff;border:1px solid #a9a9a9"></div><svg style="left:86px;top:412px" width="14" height="14" viewBox="0 0 14 14"><path d="M3.200 7l2.900 3 4.700-6.300" stroke="#333" stroke-width="1.400" fill="none"/></svg>
<div class="t g" style="left:115px;top:413px">24 BWV 851A. Prelude in D Minor.mp3</div>
<div class="t g" style="left:484px;top:413px;letter-spacing:-0.815px">J S Bach</div>
<div class="t g" style="left:607px;top:413px">BWV 851A. Prelude in D Minor</div>
<div class="t g" style="left:929px;top:413px;letter-spacing:-0.236px">Bach Keyboard Works vol 10 cd 8</div>
<div class="a" style="left:32px;top:428px;width:15px;height:1px;background:#cfcfcf"></div>
<div class="a" style="left:86px;top:432px;width:14px;height:14px;background:#fff;border:1px solid #a9a9a9"></div><svg style="left:86px;top:432px" width="14" height="14" viewBox="0 0 14 14"><path d="M3.200 7l2.900 3 4.700-6.300" stroke="#333" stroke-width="1.400" fill="none"/></svg>
<div class="t g" style="left:115px;top:433px">25 BWV 855A. Prelude in E Minor.mp3</div>
<div class="t g" style="left:484px;top:433px;letter-spacing:-0.815px">J S Bach</div>
<div class="t g" style="left:607px;top:433px">BWV 855A. Prelude in E Minor</div>
<div class="t g" style="left:929px;top:433px;letter-spacing:-0.236px">Bach Keyboard Works vol 10 cd 8</div>
<div class="a" style="left:32px;top:448px;width:15px;height:1px;background:#cfcfcf"></div>
<div class="a" style="left:80px;top:445px;width:26px;height:3px;background:#fff"></div>
<div class="a" style="left:48px;top:448px;width:1083px;height:1px;background:#d6d6d6"></div>
<div class="a" style="left:48px;top:238px;width:1083px;height:30px;background:#fff;box-shadow:0 3px 7px rgba(0,0,0,0.18);clip-path:inset(0 -3px -12px 0)"></div>
<svg style="left:68px;top:249px" width="6" height="6" viewBox="0 0 6 6"><path d="M6 0v6H0z" fill="#3a3a3a"/></svg>
<div class="t gb" style="left:79.500px;top:247px">Path: E:\klassiek\1685-1750 Bach Johann Sebastian C\Complete (Teldec 2000)\Vol.10 Keyboard works II 11 CDs\CD 08</div>
<div class="t gb" style="left:1074.300px;top:247px;letter-spacing:-0.140px">Count=25</div>
<div class="a" style="left:32px;top:267px;width:15px;height:1px;background:#cfcfcf"></div>
<div class="a" style="left:48px;top:449px;width:1083px;height:31px;background:#fff"></div>
<svg style="left:68px;top:460px" width="6" height="6" viewBox="0 0 6 6"><path d="M6 0v6H0z" fill="#3a3a3a"/></svg>
<div class="t gb" style="left:79.500px;top:458px">Path: E:\klassiek\1685-1750 Bach Johann Sebastian C\Complete (Teldec 2000)\Vol.10 Keyboard works II 11 CDs\CD 09</div>
<div class="t gb" style="left:1074.300px;top:458px;letter-spacing:-0.140px">Count=23</div>
<div class="a" style="left:32px;top:479px;width:15px;height:1px;background:#cfcfcf"></div>
<div class="a" style="left:48px;top:479px;width:1083px;height:1px;background:#d6d6d6"></div>
<div class="a" style="left:78px;top:480px;width:1052px;height:20px;background:#cbe3f6"></div>
<div class="a" style="left:603px;top:480px;width:321px;height:20px;background:#eef5fc"></div>
<div class="a" style="left:108px;top:480px;width:1px;height:20px;background:#bcd6ea"></div>
<div class="a" style="left:110px;top:480px;width:1px;height:20px;background:#bcd6ea"></div>
<div class="a" style="left:479px;top:480px;width:1px;height:20px;background:#bcd6ea"></div>
<div class="a" style="left:602px;top:480px;width:1px;height:20px;background:#bcd6ea"></div>
<div class="a" style="left:924px;top:480px;width:1px;height:20px;background:#bcd6ea"></div>
<div class="a" style="left:1108px;top:480px;width:1px;height:20px;background:#bcd6ea"></div>
<div class="a" style="left:86px;top:483px;width:14px;height:14px;background:#fff;border:1px solid #a9a9a9"></div><svg style="left:86px;top:483px" width="14" height="14" viewBox="0 0 14 14"><path d="M3.200 7l2.900 3 4.700-6.300" stroke="#333" stroke-width="1.400" fill="none"/></svg>
<div class="t g" style="left:115px;top:484px">01 01-Suite in G minor, Overture.mp3</div>
<div class="t g" style="left:484px;top:484px;letter-spacing:-0.742px">J.S. Bach</div>
<div class="t g" style="left:607px;top:484px">01-Suite in G minor, Overture</div>
<div class="t g" style="left:929px;top:484px;letter-spacing:-0.433px">Bach 2000, Vol. 10, CD 9</div>
<div class="a" style="left:32px;top:499px;width:15px;height:1px;background:#cfcfcf"></div>
<div class="a" style="left:86px;top:503px;width:14px;height:14px;background:#fff;border:1px solid #a9a9a9"></div><svg style="left:86px;top:503px" width="14" height="14" viewBox="0 0 14 14"><path d="M3.200 7l2.900 3 4.700-6.300" stroke="#333" stroke-width="1.400" fill="none"/></svg>
<div class="t g" style="left:115px;top:504px">02 02-Aria.mp3</div>
<div class="t g" style="left:484px;top:504px;letter-spacing:-0.742px">J.S. Bach</div>
<div class="t g" style="left:607px;top:504px">02-Aria</div>
<div class="t g" style="left:929px;top:504px;letter-spacing:-0.433px">Bach 2000, Vol. 10, CD 9</div>
<div class="a" style="left:32px;top:519px;width:15px;height:1px;background:#cfcfcf"></div>
<div class="a" style="left:86px;top:523px;width:14px;height:14px;background:#fff;border:1px solid #a9a9a9"></div><svg style="left:86px;top:523px" width="14" height="14" viewBox="0 0 14 14"><path d="M3.200 7l2.900 3 4.700-6.300" stroke="#333" stroke-width="1.400" fill="none"/></svg>
<div class="t g" style="left:115px;top:524px">03 03-Gavotte en Rondeau.mp3</div>
<div class="t g" style="left:484px;top:524px;letter-spacing:-0.742px">J.S. Bach</div>
<div class="t g" style="left:607px;top:524px">03-Gavotte en Rondeau</div>
<div class="t g" style="left:929px;top:524px;letter-spacing:-0.433px">Bach 2000, Vol. 10, CD 9</div>
<div class="a" style="left:32px;top:539px;width:15px;height:1px;background:#cfcfcf"></div>
<div class="a" style="left:86px;top:543px;width:14px;height:14px;background:#fff;border:1px solid #a9a9a9"></div><svg style="left:86px;top:543px" width="14" height="14" viewBox="0 0 14 14"><path d="M3.200 7l2.900 3 4.700-6.300" stroke="#333" stroke-width="1.400" fill="none"/></svg>
<div class="t g" style="left:115px;top:544px">04 04-Bourree.mp3</div>
<div class="t g" style="left:484px;top:544px;letter-spacing:-0.742px">J.S. Bach</div>
<div class="t g" style="left:607px;top:544px">04-Bourree</div>
<div class="t g" style="left:929px;top:544px;letter-spacing:-0.433px">Bach 2000, Vol. 10, CD 9</div>
<div class="a" style="left:32px;top:559px;width:15px;height:1px;background:#cfcfcf"></div>
<div class="a" style="left:86px;top:563px;width:14px;height:14px;background:#fff;border:1px solid #a9a9a9"></div><svg style="left:86px;top:563px" width="14" height="14" viewBox="0 0 14 14"><path d="M3.200 7l2.900 3 4.700-6.300" stroke="#333" stroke-width="1.400" fill="none"/></svg>
<div class="t g" style="left:115px;top:564px;letter-spacing:-0.035px">05 05-Menuett 1-Menuett 2, Menuett 3.mp3</div>
<div class="t g" style="left:484px;top:564px;letter-spacing:-0.742px">J.S. Bach</div>
<div class="t g" style="left:607px;top:564px;letter-spacing:0.036px">05-Menuett 1-Menuett 2, Menuett 3</div>
<div class="t g" style="left:929px;top:564px;letter-spacing:-0.433px">Bach 2000, Vol. 10, CD 9</div>
<div class="a" style="left:32px;top:579px;width:15px;height:1px;background:#cfcfcf"></div>
<div class="a" style="left:86px;top:583px;width:14px;height:14px;background:#fff;border:1px solid #a9a9a9"></div><svg style="left:86px;top:583px" width="14" height="14" viewBox="0 0 14 14"><path d="M3.200 7l2.900 3 4.700-6.300" stroke="#333" stroke-width="1.400" fill="none"/></svg>
<div class="t g" style="left:115px;top:584px">06 06-GIgue.mp3</div>
<div class="t g" style="left:484px;top:584px;letter-spacing:-0.742px">J.S. Bach</div>
<div class="t g" style="left:607px;top:584px">06-GIgue</div>
<div class="t g" style="left:929px;top:584px;letter-spacing:-0.433px">Bach 2000, Vol. 10, CD 9</div>
<div class="a" style="left:32px;top:599px;width:15px;height:1px;background:#cfcfcf"></div>
<div class="a" style="left:86px;top:603px;width:14px;height:14px;background:#fff;border:1px solid #a9a9a9"></div><svg style="left:86px;top:603px" width="14" height="14" viewBox="0 0 14 14"><path d="M3.200 7l2.900 3 4.700-6.300" stroke="#333" stroke-width="1.400" fill="none"/></svg>
<div class="t g" style="left:115px;top:604px">07 07-Allemande in G minor, BWV 836-.mp3</div>
<div class="t g" style="left:484px;top:604px;letter-spacing:-0.742px">J.S. Bach</div>
<div class="t g" style="left:607px;top:604px">07-Allemande in G minor, BWV 836-</div>
<div class="t g" style="left:929px;top:604px;letter-spacing:-0.433px">Bach 2000, Vol. 10, CD 9</div>
<div class="a" style="left:32px;top:619px;width:15px;height:1px;background:#cfcfcf"></div>
<div class="a" style="left:86px;top:623px;width:14px;height:14px;background:#fff;border:1px solid #a9a9a9"></div><svg style="left:86px;top:623px" width="14" height="14" viewBox="0 0 14 14"><path d="M3.200 7l2.900 3 4.700-6.300" stroke="#333" stroke-width="1.400" fill="none"/></svg>
<div class="t g" style="left:115px;top:624px">08 08-Minuet in C minor, BWV 813a.mp3</div>
<div class="t g" style="left:484px;top:624px;letter-spacing:-0.742px">J.S. Bach</div>
<div class="t g" style="left:607px;top:624px">08-Minuet in C minor, BWV 813a</div>
<div class="t g" style="left:929px;top:624px;letter-spacing:-0.433px">Bach 2000, Vol. 10, CD 9</div>
<div class="a" style="left:32px;top:639px;width:15px;height:1px;background:#cfcfcf"></div>
<div class="a" style="left:86px;top:643px;width:14px;height:14px;background:#fff;border:1px solid #a9a9a9"></div><svg style="left:86px;top:643px" width="14" height="14" viewBox="0 0 14 14"><path d="M3.200 7l2.900 3 4.700-6.300" stroke="#333" stroke-width="1.400" fill="none"/></svg>
<div class="t g" style="left:115px;top:644px">09 09-Suite (Partita) in A major, BWV 832, Allemande.mp3</div>
<div class="t g" style="left:484px;top:644px;letter-spacing:-0.742px">J.S. Bach</div>
<div class="t g" style="left:607px;top:644px">09-Suite (Partita) in A major, BWV 832, Allemande</div>
<div class="t g" style="left:929px;top:644px;letter-spacing:-0.433px">Bach 2000, Vol. 10, CD 9</div>
<div class="a" style="left:32px;top:659px;width:15px;height:1px;background:#cfcfcf"></div>
<div class="a" style="left:86px;top:663px;width:14px;height:14px;background:#fff;border:1px solid #a9a9a9"></div><svg style="left:86px;top:663px" width="14" height="14" viewBox="0 0 14 14"><path d="M3.200 7l2.900 3 4.700-6.300" stroke="#333" stroke-width="1.400" fill="none"/></svg>
<div class="t g" style="left:115px;top:664px">10 10-Air pour le Trompettes.mp3</div>
<div class="t g" style="left:484px;top:664px;letter-spacing:-0.742px">J.S. Bach</div>
<div class="t g" style="left:607px;top:664px">10-Air pour le Trompettes</div>
<div class="t g" style="left:929px;top:664px;letter-spacing:-0.433px">Bach 2000, Vol. 10, CD 9</div>
<div class="a" style="left:32px;top:679px;width:15px;height:1px;background:#cfcfcf"></div>
<div class="a" style="left:86px;top:683px;width:14px;height:14px;background:#fff;border:1px solid #a9a9a9"></div><svg style="left:86px;top:683px" width="14" height="14" viewBox="0 0 14 14"><path d="M3.200 7l2.900 3 4.700-6.300" stroke="#333" stroke-width="1.400" fill="none"/></svg>
<div class="t g" style="left:115px;top:684px">11 11-Sarabande.mp3</div>
<div class="t g" style="left:484px;top:684px;letter-spacing:-0.742px">J.S. Bach</div>
<div class="t g" style="left:607px;top:684px">11-Sarabande</div>
<div class="t g" style="left:929px;top:684px;letter-spacing:-0.433px">Bach 2000, Vol. 10, CD 9</div>
<div class="a" style="left:32px;top:699px;width:15px;height:1px;background:#cfcfcf"></div>
<div class="a" style="left:86px;top:703px;width:14px;height:14px;background:#fff;border:1px solid #a9a9a9"></div><svg style="left:86px;top:703px" width="14" height="14" viewBox="0 0 14 14"><path d="M3.200 7l2.900 3 4.700-6.300" stroke="#333" stroke-width="1.400" fill="none"/></svg>
<div class="t g" style="left:115px;top:704px">12 12-Bourree.mp3</div>
<div class="t g" style="left:484px;top:704px;letter-spacing:-0.742px">J.S. Bach</div>
<div class="t g" style="left:607px;top:704px">12-Bourree</div>
<div class="t g" style="left:929px;top:704px;letter-spacing:-0.433px">Bach 2000, Vol. 10, CD 9</div>
<div class="a" style="left:32px;top:719px;width:15px;height:1px;background:#cfcfcf"></div>
<div class="a" style="left:86px;top:723px;width:14px;height:14px;background:#fff;border:1px solid #a9a9a9"></div><svg style="left:86px;top:723px" width="14" height="14" viewBox="0 0 14 14"><path d="M3.200 7l2.900 3 4.700-6.300" stroke="#333" stroke-width="1.400" fill="none"/></svg>
<div class="t g" style="left:115px;top:724px">13 13-Gigue.mp3</div>
<div class="t g" style="left:484px;top:724px;letter-spacing:-0.742px">J.S. Bach</div>
<div class="t g" style="left:607px;top:724px">13-Gigue</div>
<div class="t g" style="left:929px;top:724px;letter-spacing:-0.433px">Bach 2000, Vol. 10, CD 9</div>
<div class="a" style="left:32px;top:739px;width:15px;height:1px;background:#cfcfcf"></div>
<div class="a" style="left:86px;top:743px;width:14px;height:14px;background:#fff;border:1px solid #a9a9a9"></div><svg style="left:86px;top:743px" width="14" height="14" viewBox="0 0 14 14"><path d="M3.200 7l2.900 3 4.700-6.300" stroke="#333" stroke-width="1.400" fill="none"/></svg>
<div class="t g" style="left:115px;top:744px">14 14-Fugue in C major, BWV 946.mp3</div>
<div class="t g" style="left:484px;top:744px;letter-spacing:-0.742px">J.S. Bach</div>
<div class="t g" style="left:607px;top:744px">14-Fugue in C major, BWV 946</div>
<div class="t g" style="left:929px;top:744px;letter-spacing:-0.433px">Bach 2000, Vol. 10, CD 9</div>
<div class="a" style="left:32px;top:759px;width:15px;height:1px;background:#cfcfcf"></div>
<div class="a" style="left:86px;top:763px;width:14px;height:14px;background:#fff;border:1px solid #a9a9a9"></div><svg style="left:86px;top:763px" width="14" height="14" viewBox="0 0 14 14"><path d="M3.200 7l2.900 3 4.700-6.300" stroke="#333" stroke-width="1.400" fill="none"/></svg>
<div class="t g" style="left:115px;top:764px">15 15-Fugue in A minor, BWV 947.mp3</div>
<div class="t g" style="left:484px;top:764px;letter-spacing:-0.742px">J.S. Bach</div>
<div class="t g" style="left:607px;top:764px">15-Fugue in A minor, BWV 947</div>
<div class="t g" style="left:929px;top:764px;letter-spacing:-0.433px">Bach 2000, Vol. 10, CD 9</div>
<div class="a" style="left:32px;top:779px;width:15px;height:1px;background:#cfcfcf"></div>
<div class="a" style="left:86px;top:783px;width:14px;height:14px;background:#fff;border:1px solid #a9a9a9"></div><svg style="left:86px;top:783px" width="14" height="14" viewBox="0 0 14 14"><path d="M3.200 7l2.900 3 4.700-6.300" stroke="#333" stroke-width="1.400" fill="none"/></svg>
<div class="t g" style="left:115px;top:784px">16 16-Fugue in D minor, BWV 948.mp3</div>
<div class="t g" style="left:484px;top:784px;letter-spacing:-0.742px">J.S. Bach</div>
<div class="t g" style="left:607px;top:784px">16-Fugue in D minor, BWV 948</div>
<div class="t g" style="left:929px;top:784px;letter-spacing:-0.433px">Bach 2000, Vol. 10, CD 9</div>
<div class="a" style="left:32px;top:799px;width:15px;height:1px;background:#cfcfcf"></div>
<div class="a" style="left:86px;top:803px;width:14px;height:14px;background:#fff;border:1px solid #a9a9a9"></div><svg style="left:86px;top:803px" width="14" height="14" viewBox="0 0 14 14"><path d="M3.200 7l2.900 3 4.700-6.300" stroke="#333" stroke-width="1.400" fill="none"/></svg>
<div class="t g" style="left:115px;top:804px">17 17-Fugue in A major, BWV 949.mp3</div>
<div class="t g" style="left:484px;top:804px;letter-spacing:-0.742px">J.S. Bach</div>
<div class="t g" style="left:607px;top:804px">17-Fugue in A major, BWV 949</div>
<div class="t g" style="left:929px;top:804px;letter-spacing:-0.433px">Bach 2000, Vol. 10, CD 9</div>
<div class="a" style="left:32px;top:819px;width:15px;height:1px;background:#cfcfcf"></div>
<div class="a" style="left:86px;top:823px;width:14px;height:14px;background:#fff;border:1px solid #a9a9a9"></div><svg style="left:86px;top:823px" width="14" height="14" viewBox="0 0 14 14"><path d="M3.200 7l2.900 3 4.700-6.300" stroke="#333" stroke-width="1.400" fill="none"/></svg>
<div class="t g" style="left:115px;top:824px">18 18-Fugue in A major, BWV 950.mp3</div>
<div class="t g" style="left:484px;top:824px;letter-spacing:-0.742px">J.S. Bach</div>
<div class="t g" style="left:607px;top:824px">18-Fugue in A major, BWV 950</div>
<div class="t g" style="left:929px;top:824px;letter-spacing:-0.433px">Bach 2000, Vol. 10, CD 9</div>
<div class="a" style="left:32px;top:839px;width:15px;height:1px;background:#cfcfcf"></div>
<div class="a" style="left:86px;top:843px;width:14px;height:14px;background:#fff;border:1px solid #a9a9a9"></div><svg style="left:86px;top:843px" width="14" height="14" viewBox="0 0 14 14"><path d="M3.200 7l2.900 3 4.700-6.300" stroke="#333" stroke-width="1.400" fill="none"/></svg>
<div class="t g" style="left:115px;top:844px">19 19-Prelude in B minor, BWV 923.mp3</div>
<div class="t g" style="left:484px;top:844px;letter-spacing:-0.742px">J.S. Bach</div>
<div class="t g" style="left:607px;top:844px">19-Prelude in B minor, BWV 923</div>
<div class="t g" style="left:929px;top:844px;letter-spacing:-0.433px">Bach 2000, Vol. 10, CD 9</div>
<div class="a" style="left:32px;top:859px;width:15px;height:1px;background:#cfcfcf"></div>
</div></div>
<svg style="left:38px;top:485px" width="5" height="9" viewBox="0 0 5 9"><path d="M0 0l4.500 4.500-4.500 4.500z" fill="#2f2f2f"/></svg>
<div class="a" style="left:1131px;top:238px;width:15px;height:619px;background:#f5f5f5"></div>
<div class="a" style="left:1134.500px;top:243px;width:0;height:0;border-left:3.500px solid transparent;border-right:3.500px solid transparent;border-bottom:6px solid #b3b3b3"></div>
<div class="a" style="left:1134.500px;top:846px;width:0;height:0;border-left:3.500px solid transparent;border-right:3.500px solid transparent;border-top:6px solid #b3b3b3"></div>
<div class="a" style="left:1135px;top:542px;width:6px;height:8px;background:#a6a6a6"></div>
<div class="a" style="left:32px;top:857px;width:1098px;height:16px;background:#f4f4f4"></div>
<div class="a" style="left:108px;top:857px;width:1px;height:16px;background:#c6c6c6"></div><div class="a" style="left:110px;top:857px;width:1px;height:16px;background:#c6c6c6"></div>
<div class="a" style="left:32px;top:857px;width:78px;height:1px;background:#c6c6c6"></div>
<div class="a" style="left:116px;top:861px;width:0;height:0;border-top:4px solid transparent;border-bottom:4px solid transparent;border-right:6px solid #b3b3b3"></div>
<div class="a" style="left:1119px;top:861px;width:0;height:0;border-top:4px solid transparent;border-bottom:4px solid transparent;border-left:6px solid #b3b3b3"></div>
<div class="a" style="left:127px;top:862px;width:393px;height:6px;background:#a9a9a9"></div>
<svg style="left:1155px;top:169px" width="16" height="17" viewBox="0 0 16 17"><path d="M2.200 9.500c-1.800-3-.500-6.500 2-7.800M5 8.500c-1.200-2-.500-4.300 1.500-5.300M5.500 1.500c4-2 8.500 1 7.500 5.500" stroke="#5a5a5a" stroke-width="1.300" fill="none"/><path d="M8 4.500c2-1 4 .5 3.500 2.500" stroke="#5a5a5a" stroke-width="1.200" fill="none"/><circle cx="10.500" cy="11.500" r="5" fill="#2f69ae"/><rect x="9.700" y="10.700" width="1.700" height="3.600" fill="#fff"/><rect x="9.700" y="8.300" width="1.700" height="1.600" fill="#fff"/></svg>
<div class="t" style="left:1174.7px;top:170.0px;font-size:12px;letter-spacing:-0.157px;color:#838383;">Selected file properties</div>
<svg style="left:1477px;top:172px" width="8" height="10" viewBox="0 0 8 10"><path d="M1.500 0.500h4v4.500h-4zM4.500 0.500v4.500M0 5.500h7M3.500 5.500v4" stroke="#4a4a4a" stroke-width="1" fill="none"/></svg>
<div class="t" style="left:1165.5px;top:208.0px;font-size:11.5px;letter-spacing:-0.540px;color:#4b5162;font-weight:700;">TECHNICAL INFORMATIONS</div>
<div class="a" style="left:1164px;top:223px;width:307px;height:1px;background:#a3a3a3"></div>
<div class="t" style="left:1178.5px;top:238.0px;font-size:11.8px;letter-spacing:-0.539px;color:#9c9c9c;">Path :</div>
<div class="t" style="left:1210.5px;top:238.0px;font-size:11.8px;letter-spacing:-0.323px;color:#4672b4;">E:\klassiek\1685-1750 Bach Johann Sebastian...</div>
<div class="t" style="left:1178.5px;top:256.0px;font-size:11.8px;letter-spacing:-0.409px;color:#9c9c9c;">Filename :</div>
<div class="t" style="left:1233.6px;top:256.0px;font-size:11.8px;letter-spacing:-0.197px;color:#4672b4;">01 01-Suite in G minor, Overture.mp3</div>
<div class="t" style="left:1178.5px;top:274.0px;font-size:11.8px;letter-spacing:-0.581px;color:#9c9c9c;">Codec :</div>
<div class="t" style="left:1219.5px;top:274.0px;font-size:11.8px;letter-spacing:-1.088px;color:#1e7487;">MP3</div>
<div class="t" style="left:1178.5px;top:292.0px;font-size:11.8px;letter-spacing:-0.046px;color:#9c9c9c;">Duration :</div>
<div class="t" style="left:1233.6px;top:292.0px;font-size:11.8px;letter-spacing:-0.626px;color:#1e7487;">03:29</div>
<div class="t" style="left:1178.5px;top:310.0px;font-size:11.8px;letter-spacing:-0.186px;color:#9c9c9c;">Channel Mode :</div>
<div class="t" style="left:1263.6px;top:310.0px;font-size:11.8px;letter-spacing:-0.495px;color:#1e7487;">Stereo</div>
<div class="t" style="left:1178.5px;top:328.0px;font-size:11.8px;letter-spacing:-0.185px;color:#9c9c9c;">Bitrate :</div>
<div class="t" style="left:1221.6px;top:328.0px;font-size:11.8px;letter-spacing:-0.362px;color:#1e7487;">320 kbps</div>
<div class="t" style="left:1178.5px;top:346.0px;font-size:11.8px;letter-spacing:-0.513px;color:#9c9c9c;">Sample Rate :</div>
<div class="t" style="left:1250.4px;top:346.0px;font-size:11.8px;letter-spacing:-0.405px;color:#1e7487;">44.100 Hertz</div>
<div class="t" style="left:1178.5px;top:369.0px;font-size:11.8px;letter-spacing:0.103px;color:#1a7a8a;">Open containing folder...</div>
<div class="t" style="left:1165.5px;top:408.0px;font-size:11.5px;letter-spacing:-0.441px;color:#4b5162;font-weight:700;">COMMON TAGS</div>
<div class="a" style="left:1164px;top:423px;width:307px;height:1px;background:#a3a3a3"></div>
<div class="t" style="left:1178.5px;top:438.0px;font-size:11.8px;letter-spacing:-0.167px;color:#3a3a3a;">Artist :</div>
<div class="t" style="left:1215.6px;top:438.0px;font-size:11.8px;letter-spacing:-0.745px;color:#3a3a3a;">J.S. Bach</div>
<div class="t" style="left:1178.5px;top:456.0px;font-size:11.8px;letter-spacing:-0.330px;color:#3a3a3a;">Title :</div>
<div class="t" style="left:1210.0px;top:456.0px;font-size:11.8px;letter-spacing:-0.130px;color:#3a3a3a;">01-Suite in G minor, Overture</div>
<div class="t" style="left:1178.5px;top:474.0px;font-size:11.8px;letter-spacing:-0.272px;color:#3a3a3a;">Album :</div>
<div class="t" style="left:1222.5px;top:474.0px;font-size:11.8px;letter-spacing:-0.459px;color:#3a3a3a;">Bach 2000, Vol. 10, CD 9</div>
<div class="t" style="left:1178.5px;top:492.0px;font-size:11.8px;letter-spacing:-0.483px;color:#3a3a3a;">Track Number :</div>
<div class="t" style="left:1258.5px;top:492.0px;font-size:11.8px;letter-spacing:-1.063px;color:#3a3a3a;">1</div>
<div class="t" style="left:1178.5px;top:510.0px;font-size:11.8px;letter-spacing:-0.522px;color:#3a3a3a;">Genre :</div>
<div class="t" style="left:1220.4px;top:511.0px;font-size:11.8px;letter-spacing:-0.513px;color:#3a3a3a;">Classical</div>
<div class="a" style="left:1442px;top:516px;width:0;height:0;border-left:3.500px solid transparent;border-right:3.500px solid transparent;border-top:4px solid #4a4a4a"></div>
<div class="t" style="left:1165.5px;top:549.0px;font-size:11.5px;letter-spacing:-0.312px;color:#4b5162;font-weight:700;">UNCOMMON TAGS</div>
<div class="a" style="left:1164px;top:564px;width:307px;height:1px;background:#a3a3a3"></div>
<div class="t" style="left:1178.5px;top:579.0px;font-size:11.8px;letter-spacing:-0.101px;color:#3a3a3a;">Album Artist :</div>
<div class="t" style="left:1251.6px;top:579.0px;font-size:11.8px;letter-spacing:-0.745px;color:#3a3a3a;">J.S. Bach</div>
<div class="t" style="left:1165.5px;top:618.0px;font-size:11.5px;letter-spacing:-0.886px;color:#4b5162;font-weight:700;">EMBEDDED COVER</div>
<div class="a" style="left:1164px;top:633px;width:307px;height:1px;background:#a3a3a3"></div>
<div class="a" style="left:1180px;top:650px;width:272px;height:181px;background:#04a3f4;box-shadow:2px 0 3px rgba(60,60,60,0.750);clip-path:inset(0 -6px 0 0)"><div class="a" style="left:0;top:0;width:136px;height:68px;background:#05a8f6"></div><div class="a" style="left:136px;top:0;width:136px;height:68px;background:#0586df"></div><div class="a" style="left:0;top:68px;width:136px;height:113px;background:#04a0f2"></div><div class="c" style="left:136px;top:79px;font-family:'Liberation Serif',serif;font-size:25px;line-height:37.700px;color:#0888dd;letter-spacing:0.200px">BACH<br>KEYBOARD<br>WORKS II</div></div>
<div class="a" style="left:1164px;top:838px;width:14px;height:14px;background:#fff;border:1px solid #a9a9a9"></div><svg style="left:1164px;top:838px" width="14" height="14" viewBox="0 0 14 14"><path d="M3.200 7l2.900 3 4.900-6.600" stroke="#333" stroke-width="1.500" fill="none"/></svg>
<div class="t" style="left:1182.6px;top:839.0px;font-size:11.8px;letter-spacing:-0.373px;color:#3a3a3a;">Hide Empty Fields</div>
<div class="a" style="left:1475.500px;top:211px;width:0;height:0;border-left:3.500px solid transparent;border-right:3.500px solid transparent;border-bottom:6px solid #b3b3b3"></div>
<div class="a" style="left:1475.500px;top:820px;width:0;height:0;border-left:3.500px solid transparent;border-right:3.500px solid transparent;border-top:6px solid #b3b3b3"></div>
<div class="a" style="left:1476px;top:222px;width:6px;height:458px;background:#adadad"></div>
<div class="a" style="left:0;top:875px;width:1500px;height:25px;background:#F4F4F4;border-top:1px solid #a3a3a3;border-left:1px solid #8f8f8f;border-right:1px solid #a0a0a0;border-bottom:1px solid #a8a8a8"></div>
<div class="t" style="left:5.5px;top:881.0px;font-size:12px;letter-spacing:-0.260px;color:#3a3a3a;">Checked items in the workspace:  5847 / 5847</div>
<svg style="left:1489px;top:889px" width="8" height="8" viewBox="0 0 8 8" fill="#3a3a3a"><rect x="6" y="0" width="1" height="1"/><rect x="4" y="2" width="1" height="1"/><rect x="6" y="2" width="1" height="1"/><rect x="2" y="4" width="1" height="1"/><rect x="4" y="4" width="1" height="1"/><rect x="6" y="4" width="1" height="1"/><rect x="0" y="6" width="1" height="1"/><rect x="2" y="6" width="1" height="1"/><rect x="4" y="6" width="1" height="1"/><rect x="6" y="6" width="1" height="1"/></svg>
</div></body></html>
